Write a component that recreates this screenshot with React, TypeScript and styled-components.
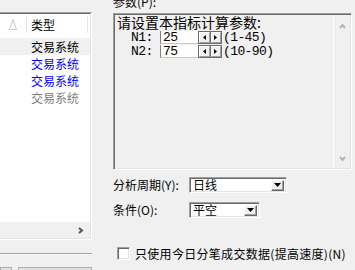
import React from 'react';
import styled, { createGlobalStyle } from 'styled-components';

const GlobalStyle = createGlobalStyle`
  html, body {
    margin: 0;
    padding: 0;
    width: 355px;
    height: 270px;
    overflow: hidden;
    background: #f0f0f0;
  }
  body {
    font-family: "Noto Sans CJK SC", "Liberation Sans", sans-serif;
    font-size: 12px;
    color: #000;
  }
`;

const Dialog = styled.div`
  display: flex;
  width: 355px;
  height: 270px;
  overflow: hidden;
`;

/* ---------- left: indicator list ---------- */

const LeftPane = styled.div`
  width: 92px;
  flex: none;
  display: flex;
  flex-direction: column;
  padding-top: 12px;
  overflow: hidden;

  & > * {
    flex: none;
  }
`;

const ListFrame = styled.div`
  height: 228px;
  box-sizing: border-box;
  border-top: 1px solid #a0a0a0;
  border-right: 1px solid #ffffff;
  border-bottom: 1px solid #ffffff;
`;

const ListView = styled.div`
  height: 100%;
  box-sizing: border-box;
  display: flex;
  flex-direction: column;
  border-top: 1px solid #696969;
  border-right: 1px solid #e3e3e3;
  border-bottom: 1px solid #e3e3e3;
  background: #ffffff;
`;

const HeaderRow = styled.div`
  display: grid;
  grid-template-columns: 27px 61px 1fr;
  height: 21px;
  align-items: stretch;
  margin-bottom: 3px;
`;

const HeaderCell = styled.div<{ $center?: boolean }>`
  display: flex;
  align-items: center;
  justify-content: ${(p) => (p.$center ? 'center' : 'flex-start')};
  padding-left: ${(p) => (p.$center ? '0' : '4px')};
  border-right: 1px solid #e5e5e5;
  margin: 2px 0;
  font-size: 12px;
  line-height: 12px;
`;

const Rows = styled.div`
  flex: 1;
`;

type Tone = 'selected' | 'active' | 'disabled';

const toneColor: Record<Tone, string> = {
  selected: '#000000',
  active: '#0000ff',
  disabled: '#808080',
};

const Row = styled.div<{ $tone: Tone }>`
  display: grid;
  grid-template-columns: 31px 1fr;
  height: 17px;
  align-items: center;
  font-size: 12px;
  line-height: 12px;
  color: ${(p) => toneColor[p.$tone]};
  background: ${(p) => (p.$tone === 'selected' ? '#f0f0f0' : 'transparent')};
  white-space: nowrap;
`;

const HScroll = styled.div`
  height: 16px;
  flex: none;
  background: #f0f0f0;
  display: flex;
  align-items: center;
  justify-content: flex-end;
  padding-right: 6px;
`;

const Divider = styled.div`
  height: 1px;
  margin-top: 13px;
  background: #a0a0a0;
  border-bottom: 1px solid #ffffff;
`;

const ButtonStrip = styled.div`
  display: flex;
  gap: 6px;
  margin-top: 12px;
`;

const StubButton = styled.div<{ $w: number }>`
  width: ${(p) => p.$w}px;
  height: 20px;
  box-sizing: border-box;
  border: 1px solid #adadad;
  border-bottom: none;
  background: #e1e1e1;
`;

/* ---------- right: parameters ---------- */

const RightPane = styled.div`
  width: 239px;
  flex: none;
  margin-left: 21px;
  display: flex;
  flex-direction: column;
`;

const GroupLabel = styled.div`
  font-size: 12px;
  line-height: 12px;
  margin-top: -4px;
  height: 12px;
`;

const ParamBox = styled.div`
  margin-top: 5px;
  height: 157px;
  box-sizing: border-box;
  display: flex;
  border: 1px solid;
  border-color: #a0a0a0 #ffffff #ffffff #a0a0a0;
  box-shadow: inset 1px 1px 0 #696969, inset -1px -1px 0 #e3e3e3;
  background: #f0f0f0;
`;

const ParamContent = styled.div`
  flex: 1;
  padding: 1px 0 0 3px;
`;

const ParamTitle = styled.div`
  font-size: 14px;
  line-height: 14px;
  height: 15px;
  white-space: nowrap;
`;

const ParamRow = styled.div`
  display: grid;
  grid-template-columns: 43px 38px 24px auto;
  align-items: center;
  height: 13px;
  margin-top: 1px;
`;

const latin = `
  font-family: "Liberation Mono", "DejaVu Sans Mono", monospace;
  font-size: 13px;
  letter-spacing: -0.6px;
  line-height: 13px;
`;

const ParamName = styled.span`
  ${latin}
  padding-left: 14px;
`;

const ParamInput = styled.div`
  ${latin}
  height: 13px;
  box-sizing: border-box;
  background: #ffffff;
  border-left: 1px solid #808080;
  border-bottom: 1px solid #c8c8c8;
  padding-left: 2px;
`;

const Spinner = styled.div`
  display: flex;
  gap: 1px;
  height: 13px;
  box-sizing: border-box;
  padding: 1px;
  background: #6d6d6d;
`;

const SpinButton = styled.div`
  flex: 1;
  display: flex;
  align-items: center;
  justify-content: center;
  background: #f0f0f0;
  border-top: 1px solid #ffffff;
  border-left: 1px solid #ffffff;
  border-bottom: 1px solid #a0a0a0;
  border-right: 1px solid #a0a0a0;
`;

const RangeText = styled.span`
  ${latin}
  padding-left: 1px;
`;

const VScroll = styled.div`
  width: 16px;
  flex: none;
  margin: 2px 1px 2px 0;
  border-left: 1px solid #ffffff;
  display: flex;
  flex-direction: column;
  justify-content: space-between;
  align-items: center;
  padding: 7px 0 5px;
`;

const Form = styled.div`
  display: grid;
  grid-template-columns: 76px auto;
  row-gap: 9px;
  align-items: center;
  margin-top: 7px;
`;

const FieldLabel = styled.span`
  font-size: 12px;
  line-height: 12px;
  white-space: nowrap;
`;

const Select = styled.div<{ $w: number }>`
  width: ${(p) => p.$w}px;
  height: 16px;
  box-sizing: border-box;
  display: flex;
  align-items: center;
  background: #ffffff;
  border: 1px solid;
  border-color: #a0a0a0 #ffffff #ffffff #a0a0a0;
  box-shadow: inset 1px 1px 0 #696969, inset -1px -1px 0 #e3e3e3;
  padding: 2px 2px 2px 3px;
`;

const SelectText = styled.span`
  flex: 1;
  font-size: 12px;
  line-height: 12px;
`;

const DropButton = styled.div`
  width: 13px;
  height: 11px;
  box-sizing: border-box;
  display: flex;
  align-items: center;
  justify-content: center;
  background: #f0f0f0;
  border: 1px solid;
  border-color: #ffffff #696969 #696969 #ffffff;
  box-shadow: inset -1px -1px 0 #a0a0a0;
`;

const CheckRow = styled.div`
  display: flex;
  align-items: center;
  gap: 5px;
  margin-top: 29px;
  padding-left: 4px;
`;

const CheckBox = styled.div`
  width: 13px;
  height: 13px;
  box-sizing: border-box;
  background: #ffffff;
  border: 1px solid;
  border-color: #a0a0a0 #ffffff #ffffff #a0a0a0;
  box-shadow: inset 1px 1px 0 #696969, inset -1px -1px 0 #e3e3e3;
`;

const CheckLabel = styled.span`
  font-size: 12px;
  line-height: 13px;
  white-space: nowrap;
  letter-spacing: 0.3px;
`;

function SortMark() {
  return (
    <svg width="8" height="11" viewBox="0 0 8 11">
      <polygon points="4,0.5 7.5,10.5 0.5,10.5" fill="none" stroke="#c8c8c8" strokeWidth="1" />
    </svg>
  );
}

function Chevron({ dir, color, size = 7 }: { dir: 'up' | 'down' | 'right'; color: string; size?: number }) {
  const pts =
    dir === 'up' ? '1,5 3.5,2 6,5' : dir === 'down' ? '1,2 3.5,5 6,2' : '2,1 5,3.5 2,6';
  return (
    <svg width={size} height={size} viewBox="0 0 7 7">
      <polyline points={pts} fill="none" stroke={color} strokeWidth="2" />
    </svg>
  );
}

function Tri({ dir }: { dir: 'left' | 'right' | 'down' }) {
  if (dir === 'down') {
    return (
      <svg width="7" height="4" viewBox="0 0 7 4">
        <polygon points="0,0 7,0 3.5,4" fill="#000" />
      </svg>
    );
  }
  return (
    <svg width="3" height="5" viewBox="0 0 3 5">
      <polygon points={dir === 'left' ? '3,0 3,5 0,2.5' : '0,0 0,5 3,2.5'} fill="#000" />
    </svg>
  );
}

const rows: { name: string; tone: Tone }[] = [
  { name: '交易系统', tone: 'selected' },
  { name: '交易系统', tone: 'active' },
  { name: '交易系统', tone: 'active' },
  { name: '交易系统', tone: 'disabled' },
];

const params = [
  { name: 'N1:', value: '25', range: '(1-45)' },
  { name: 'N2:', value: '75', range: '(10-90)' },
];

export default function App() {
  return (
    <>
      <GlobalStyle />
      <Dialog>
        <LeftPane>
          <ListFrame>
            <ListView>
              <HeaderRow>
                <HeaderCell $center>
                  <SortMark />
                </HeaderCell>
                <HeaderCell>类型</HeaderCell>
                <div />
              </HeaderRow>
              <Rows>
                {rows.map((r, i) => (
                  <Row key={i} $tone={r.tone}>
                    <span />
                    <span>{r.name}</span>
                  </Row>
                ))}
              </Rows>
              <HScroll>
                <Chevron dir="right" color="#555555" />
              </HScroll>
            </ListView>
          </ListFrame>
          <Divider />
          <ButtonStrip>
            <StubButton $w={12} />
            <StubButton $w={74} />
          </ButtonStrip>
        </LeftPane>

        <RightPane>
          <GroupLabel>参数(P):</GroupLabel>
          <ParamBox>
            <ParamContent>
              <ParamTitle>请设置本指标计算参数:</ParamTitle>
              {params.map((p) => (
                <ParamRow key={p.name}>
                  <ParamName>{p.name}</ParamName>
                  <ParamInput>{p.value}</ParamInput>
                  <Spinner>
                    <SpinButton>
                      <Tri dir="left" />
                    </SpinButton>
                    <SpinButton>
                      <Tri dir="right" />
                    </SpinButton>
                  </Spinner>
                  <RangeText>{p.range}</RangeText>
                </ParamRow>
              ))}
            </ParamContent>
            <VScroll>
              <Chevron dir="up" color="#b4b4b4" />
              <Chevron dir="down" color="#b4b4b4" />
            </VScroll>
          </ParamBox>

          <Form>
            <FieldLabel>分析周期(Y):</FieldLabel>
            <Select $w={98}>
              <SelectText>日线</SelectText>
              <DropButton>
                <Tri dir="down" />
              </DropButton>
            </Select>
            <FieldLabel>条件(O):</FieldLabel>
            <Select $w={71}>
              <SelectText>平空</SelectText>
              <DropButton>
                <Tri dir="down" />
              </DropButton>
            </Select>
          </Form>

          <CheckRow>
            <CheckBox />
            <CheckLabel>只使用今日分笔成交数据(提高速度)(N)</CheckLabel>
          </CheckRow>
        </RightPane>
      </Dialog>
    </>
  );
}
